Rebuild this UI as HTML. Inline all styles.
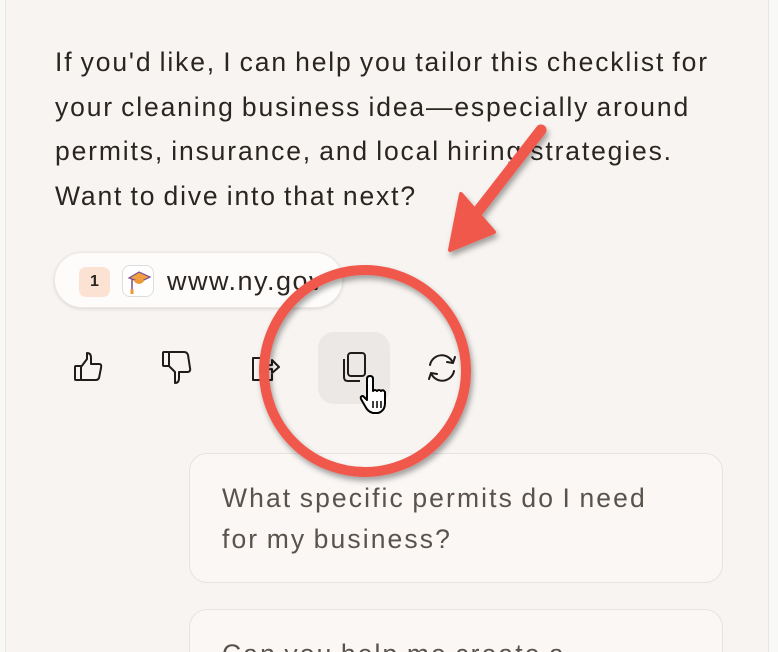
<!DOCTYPE html>
<html><head><meta charset="utf-8"><style>
*{margin:0;padding:0;box-sizing:border-box}
html,body{width:778px;height:652px;overflow:hidden;background:#f8f8f7}
body{font-family:"Liberation Sans",sans-serif;position:relative}
.panel{position:absolute;left:5px;top:0;width:764px;height:652px;background:#f7f4f1;border-left:1px solid #e8e5e2;border-right:1px solid #e8e5e2}
.txt{position:absolute;left:55px;top:40px;width:680px;font-size:26.5px;line-height:44.5px;color:#2a2521;letter-spacing:1.85px;word-spacing:-2px}
.chip{position:absolute;left:54px;top:252px;width:289px;height:56px;background:#fdfcfb;border-radius:28px;box-shadow:0 1px 3px rgba(0,0,0,.12);border:1px solid #ece8e4}
.num{position:absolute;left:24px;top:14px;width:31px;height:30px;background:#fbe2d3;border-radius:7px;font-size:16px;font-weight:bold;color:#2a2521;text-align:center;line-height:30px}
.fav{position:absolute;left:67px;top:12px;width:32px;height:32px;border-radius:8px;border:1px solid #ddd;background:#fff}
.url{position:absolute;left:112px;top:13px;font-size:27px;color:#2a2521;letter-spacing:1.5px}
.ic{position:absolute;top:350px}
.hov{position:absolute;left:318px;top:332px;width:72px;height:72px;background:#ebe8e5;border-radius:16px}
.card{position:absolute;left:189px;width:534px;background:#faf7f5;border:1.5px solid #e7e3df;border-radius:18px;font-size:26.5px;line-height:41px;color:#5a524c;padding:24px 50px 24px 32px;letter-spacing:2.1px;word-spacing:-2px;overflow:hidden}
</style></head><body>
<div class="panel"></div>
<div class="txt">If you'd like, I can help you tailor this checklist for your cleaning business idea—especially around permits, insurance, and local hiring strategies. Want to dive into that next?</div>
<div class="chip"><div class="num">1</div><div class="fav"><svg width="32" height="32" viewBox="0 0 32 32"><path d="M6 12 L16 6 L27 11 L17 16Z" fill="#f0a040" stroke="#7a4a90" stroke-width="1.2"/><path d="M10 14 Q16 22 22 14" fill="#e89a3a"/><line x1="9" y1="13" x2="9" y2="26" stroke="#7a4a90" stroke-width="1.5"/><rect x="7.5" y="23" width="3" height="5" fill="#e89a3a"/></svg></div><div class="url">www.ny.gov</div></div>
<div class="hov"></div>
<svg class="ic" style="left:72px" width="36" height="36" viewBox="0 0 36 36" fill="none" stroke="#1f1c1a" stroke-width="2" stroke-linejoin="round"><rect x="3" y="16" width="6" height="14" rx="1"/><path d="M9 17 L15 9 V3 Q19 3 19 8 V14 H27 Q30 14 29 18 L27 28 Q26 30 24 30 H9"/></svg>
<svg class="ic" style="left:160px" width="36" height="36" viewBox="0 0 36 36" fill="none" stroke="#1f1c1a" stroke-width="2" stroke-linejoin="round"><rect x="3" y="2" width="6" height="14" rx="1"/><path d="M9 16 L15 22 V33 Q19 33 19 28 V22 H27 Q31 22 30 18 L28 5 Q27 2 24 2 H9"/></svg>
<svg class="ic" style="left:248px" width="36" height="36" viewBox="0 0 36 36" fill="none" stroke="#1f1c1a" stroke-width="2" stroke-linejoin="round"><path d="M14 8 H5 V30 H24 V24"/><path d="M13 24 Q13 15 24 15 V10 L31 17 L24 23 V19 Q17 19 13 24Z"/></svg>
<svg class="ic" style="left:338px" width="36" height="36" viewBox="0 0 36 36" fill="none" stroke="#1f1c1a" stroke-width="2" stroke-linejoin="round"><rect x="10" y="3" width="17" height="23" rx="3"/><path d="M6 9 V27 Q6 31 10 31 H22"/></svg>
<svg class="ic" style="left:424px" width="36" height="36" viewBox="0 0 36 36" fill="none" stroke="#1f1c1a" stroke-width="2" stroke-linecap="round" stroke-linejoin="round"><path d="M6 15 A12 12 0 0 1 29 13 M29 13 L31 7 M29 13 L23 12"/><path d="M30 21 A12 12 0 0 1 7 23 M7 23 L5 29 M7 23 L13 24"/></svg>
<svg style="position:absolute;left:358px;top:375px" width="36" height="42" viewBox="0 0 36 42"><path d="M9 4 Q9 1 12 1 Q15 1 15 4 V16 Q17 14 19 16 Q21 14 23 16 Q25 14 27 17 V28 Q27 36 20 38 H15 Q10 37 7 31 L3 24 Q2 21 5 21 L9 25Z" fill="#fff" stroke="#000" stroke-width="2" stroke-linejoin="round"/><path d="M15 26v7M19 26v7M23 26v7" stroke="#000" stroke-width="1.5"/></svg>
<div class="card" style="top:453px;height:130px">What specific permits do I need for my business?</div>
<div class="card" style="top:609px;height:43px;border-bottom:none;border-radius:18px 18px 0 0">Can you help me create a</div>
<svg style="position:absolute;left:0;top:0" width="778" height="652" viewBox="0 0 778 652">
<defs><filter id="s" x="-20%" y="-20%" width="140%" height="140%"><feDropShadow dx="2" dy="4" stdDeviation="3" flood-color="#000" flood-opacity=".35"/></filter></defs>
<g filter="url(#s)">
<circle cx="365" cy="371" r="101" fill="none" stroke="#f0584c" stroke-width="10"/>
<path d="M541 130 L475 215" stroke="#f0584c" stroke-width="11" stroke-linecap="round"/>
<path d="M450 250 L461 194 L494 232Z" fill="#f0584c" stroke="#f0584c" stroke-width="4" stroke-linejoin="round"/>
</g>
</svg>
</body></html>
